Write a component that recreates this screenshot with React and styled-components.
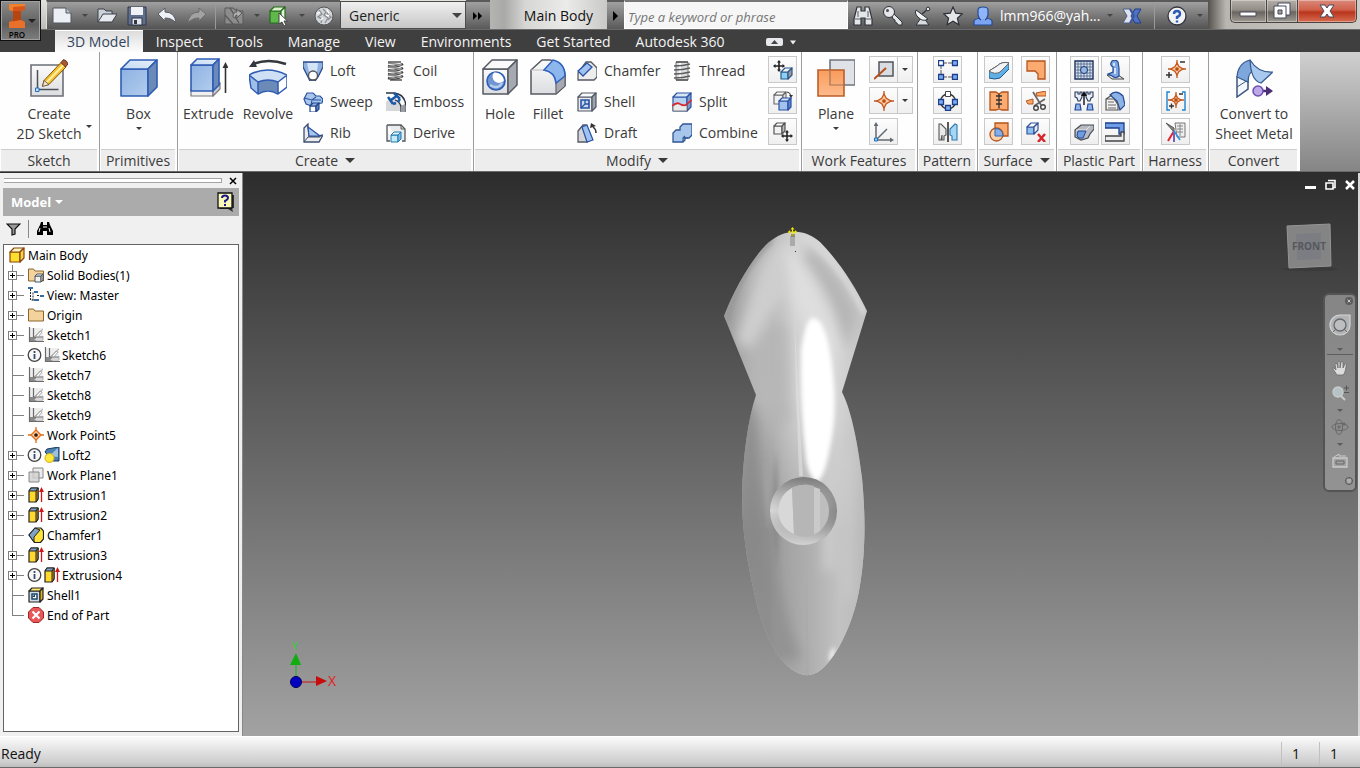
import styled, { createGlobalStyle } from "styled-components";

const GlobalStyle = createGlobalStyle`
  * {
    box-sizing: border-box;
  }
  body {
    margin: 0;
    font-family: "Open Sans", "Noto Sans", sans-serif;
    font-size: 14px;
    color: #3a3a3a;
    overflow: hidden;
  }
  button {
    background: none;
    border: none;
    padding: 0;
    margin: 0;
    font: inherit;
    color: inherit;
    cursor: pointer;
  }
  svg {
    display: block;
    flex: none;
  }
`;

/* ---------- drawing helpers ---------- */

const Glyph = ({ w = 20, h = 20, children }) => (
  <svg width={w} height={h} viewBox={`0 0 ${w} ${h}`} fill="none" aria-hidden="true">
    {children}
  </svg>
);

const Cube = ({ x, y, w, h, d, front = "#a9c6ea", top = "#d8e7f8", side = "#6684b4", stroke = "#24488c", sw = 1.2 }) => (
  <g stroke={stroke} strokeWidth={sw} strokeLinejoin="round">
    <path fill={front} d={`M${x} ${y + d}h${w}v${h}h${-w}z`} />
    <path fill={top} d={`M${x} ${y + d}l${d} ${-d}h${w}l${-d} ${d}z`} />
    <path fill={side} d={`M${x + w} ${y + d}l${d} ${-d}v${h}l${-d} ${d}z`} />
  </g>
);

const WorkPoint = ({ cx = 10, cy = 10, r = 6 }) => (
  <g stroke="#c2561c" strokeWidth="1.300">
    <path d={`M${cx} ${cy - r - 3}v${2 * r + 6}M${cx - r - 3} ${cy}h${2 * r + 6}`} />
    <path
      fill="#fcc79b"
      d={`M${cx} ${cy - r}l${r / 3} ${r * 0.6}l${r * 0.66} ${r * 0.4}l${-r * 0.66} ${r * 0.4}l${-r / 3} ${r * 0.6}l${-r / 3} ${-r * 0.6}l${-r * 0.66} ${-r * 0.4}l${r * 0.66} ${-r * 0.4}z`}
    />
    <circle cx={cx} cy={cy} r="1.200" fill="#7a2c08" />
  </g>
);

const MoveCross = ({ x, y }) => (
  <path
    transform={`translate(${x} ${y})`}
    d="M0-6l2 2.500h-1.200v2.700h2.700v-1.200l2.500 2l-2.500 2v-1.200h-2.700v2.700h1.200l-2 2.500l-2-2.500h1.200v-2.700h-2.700v1.200l-2.500-2l2.500-2v1.200h2.700v-2.700h-1.200z"
    fill="#222"
  />
);

const Caret = ({ w = 8, color = "#3a3a3a" }) => (
  <svg width={w} height={w / 2} viewBox="0 0 8 4" aria-hidden="true">
    <path d="M0 0h8l-4 4z" fill={color} />
  </svg>
);

/* gradients shared by the icons */
const IconDefs = () => (
  <svg width="0" height="0" style={{ position: "absolute" }} aria-hidden="true">
    <defs>
      <linearGradient id="blueFace" x1="0" y1="0" x2="1" y2="1">
        <stop offset="0" stopColor="#8db2e2" />
        <stop offset="1" stopColor="#b3cdee" />
      </linearGradient>
      <linearGradient id="blueTop" x1="0" y1="1" x2="1" y2="0">
        <stop offset="0" stopColor="#c3d9f2" />
        <stop offset="1" stopColor="#e6f0fb" />
      </linearGradient>
      <linearGradient id="grayFace" x1="0" y1="0" x2="0" y2="1">
        <stop offset="0" stopColor="#fbfbfc" />
        <stop offset="1" stopColor="#dcdde0" />
      </linearGradient>
      <linearGradient id="orangeFace" x1="0" y1="0" x2="0" y2="1">
        <stop offset="0" stopColor="#fb9550" />
        <stop offset="1" stopColor="#fdb582" />
      </linearGradient>
    </defs>
  </svg>
);

/* ---------- large ribbon icons ---------- */

const big = {
  sketch: (
    <Glyph w={38} h={40}>
      <path d="M1 7h32v31h-32z" fill="url(#grayFace)" stroke="#6b6f76" strokeWidth="1.600" />
      <path d="M7.500 12v19.500h21" stroke="#4b4f57" strokeWidth="1.500" />
      <path d="M5.500 30h3.500v3.500h-3.500z" fill="#bfe0fa" stroke="#1e6fc0" />
      <path d="M14 22.500l17-18l5 4.500l-17 17.500l-6.500 1.500z" fill="#f8bf2c" stroke="#7c5510" />
      <path d="M16.500 24.500l17-17.500" stroke="#fff0a8" strokeWidth="1.800" />
      <path d="M14 22.500l5 4l-6.500 2z" fill="#f7e4c8" stroke="#5d4a33" strokeWidth=".8" />
      <path d="M31 4.500l2.500-3q3.500 1 4.500 4.500l-2.500 3z" fill="#a85a36" stroke="#6f3317" />
    </Glyph>
  ),
  box: (
    <Glyph w={38} h={40}>
      <Cube x={1} y={2} w={27} h={27} d={9} front="url(#blueFace)" top="url(#blueTop)" side="#6c8ab8" stroke="#2f5cb4" sw={1.6} />
    </Glyph>
  ),
  extrude: (
    <Glyph w={38} h={40}>
      <Cube x={1} y={25} w={22} h={6} d={7} front="#f0f0f0" top="#eee" side="#ccc" stroke="#77797c" />
      <Cube x={1} y={1} w={22} h={26} d={6} front="url(#blueFace)" top="url(#blueTop)" side="#6c8ab8" stroke="#2f5cb4" sw={1.6} />
      <path d="M35.500 35v-26" stroke="#333" strokeWidth="1.600" />
      <path d="M35.500 4l3 6h-6z" fill="#333" />
    </Glyph>
  ),
  revolve: (
    <Glyph w={38} h={40}>
      <path d="M4 6q15-6 33 0" stroke="#33383f" strokeWidth="2.500" />
      <path d="M0 9l5-7l3 7z" fill="#33383f" />
      <path d="M0 17q18-10 38 0l-9 7q-10-4-20 0z" fill="#cfe0f4" />
      <path d="M0 17l9 7v11l-7-6z" fill="#9fbfe6" />
      <path d="M9 24q10-4 20 0v11q-10-5-20 0z" fill="#6c8ab8" />
      <path d="M29 24l9-7v12l-9 7z" fill="#fff" />
      <path d="M0 17q18-10 38 0v12l-9 7q-10-6-20 0l-7-6zM0 17l9 7v12M9 24q10-4 20 0v12M29 24l9-7" stroke="#2f5cb4" strokeWidth="1.500" strokeLinejoin="round" />
    </Glyph>
  ),
  hole: (
    <Glyph w={38} h={40}>
      <Cube x={2} y={2} w={25} h={25} d={9} front="url(#grayFace)" top="#fafafa" side="#a6a9af" stroke="#565a62" sw={1.5} />
      <circle cx="15" cy="23" r="9" fill="#6f95d2" stroke="#2f5cb4" strokeWidth="1.600" />
      <path d="M13 14.500a6 6 0 0 0 10 8a9 9 0 0 0-10-8z" fill="#fff" />
      <path d="M9 27q8 5 12-2" stroke="#b7cdec" strokeWidth="2.500" />
    </Glyph>
  ),
  fillet: (
    <Glyph w={38} h={40}>
      <path d="M2 12l11-10h8q15 3 15 16v10l-9 8h-25z" fill="url(#grayFace)" stroke="#565a62" strokeWidth="1.500" />
      <path d="M2 12h12q12 2 13 14v10" stroke="#bbb" />
      <path d="M27 25l9-8v11l-9 8z" fill="#a6a9af" stroke="#565a62" />
      <path d="M15 12l9-10q12 3 12 16l-9 7q-1-11-12-13z" fill="#8db6ec" stroke="#2f62c0" strokeWidth="1.500" />
    </Glyph>
  ),
  plane: (
    <Glyph w={38} h={40}>
      <path d="M13 2h25v25h-25z" fill="#dfe2e6" stroke="#70757e" strokeWidth="1.600" />
      <path d="M1 12h26v26h-26z" fill="url(#orangeFace)" fillOpacity=".92" stroke="#bb5f28" strokeWidth="1.600" />
      <path d="M13 12v15h14" stroke="#a97a5c" strokeWidth="1.200" />
    </Glyph>
  ),
  convert: (
    <Glyph w={38} h={40}>
      <path d="M2 19l11-6v18l-11 8z" fill="#f4f7fb" stroke="#3c5680" strokeWidth="1.500" />
      <path d="M2 29l11-7" stroke="#3c5680" />
      <path d="M2 19q1-14 13-17q3 7 6 10q-8 1-8 12z" fill="#7fa7db" stroke="#34598f" strokeWidth="1.200" />
      <path d="M15 2q8 13 23 12l-12 11q-10-2-11-23z" fill="#a9c9ee" stroke="#34598f" strokeWidth="1.200" />
      <path d="M24 33h9" stroke="#4b2f74" strokeWidth="2.500" />
      <path d="M31 28l7 5l-7 5z" fill="#4b2f74" />
      <circle cx="23" cy="33" r="5" fill="#bda9ea" stroke="#6d4fae" strokeWidth="1.500" />
    </Glyph>
  ),
};

/* ---------- 20px ribbon icons ---------- */

const small = {
  loft: (
    <Glyph>
      <path d="M0 1h20v5l-5 10l-3 4h-5l-2-4l-5-10z" fill="#8fb2e0" stroke="#2c4c8c" strokeWidth="1.300" />
      <path d="M4 2h11l-1 9h-8z" fill="#d3e4f7" />
      <circle cx="10" cy="14.500" r="4.500" fill="#fff" stroke="#555" strokeWidth="1.300" />
    </Glyph>
  ),
  sweep: (
    <Glyph>
      <path d="M4 1h6l3 3h4l3 3-1 4-7 1-3 2-6-2-2-5z" fill="#a9c6ea" stroke="#2a52a4" strokeWidth="1.200" />
      <path d="M1 6l8 2l4-3M9 8l-1 5M18 8h-8" stroke="#2a52a4" strokeWidth="1.100" />
      <Cube x={7} y={11} w={6} h={6} d={3} front="#fff" top="#8fb2e0" side="#5b7fc0" />
    </Glyph>
  ),
  rib: (
    <Glyph>
      <path d="M1 5l4-4v3l1 9h10l4-1l-4 7h-15z" fill="#ececee" stroke="#3b4d70" strokeWidth="1.300" />
      <path d="M5 4l12 9h-11z" fill="#a9c6ea" stroke="#2a52a4" strokeWidth="1.200" />
      <path d="M1 19l4-5h12" stroke="#3b4d70" />
    </Glyph>
  ),
  coil: (
    <Glyph>
      {[2, 6, 10, 14].map((y) => (
        <g key={y}>
          <path d={`M2 ${y + 3}q8 2 15-2`} stroke="#3a3a3a" strokeWidth="2.500" />
          <path d={`M2 ${y}l14 2`} stroke="#8a8a8a" strokeWidth="1.500" />
          <path d={`M3 ${y + 3}q7 1 12-1`} stroke="#bbb" strokeWidth=".8" />
        </g>
      ))}
      <path d="M2 1h13M4 19h12" stroke="#555" strokeWidth="1.500" />
    </Glyph>
  ),
  emboss: (
    <Glyph>
      <path d="M0 10l4-4q8-2 12 7v6h-16z" fill="#d5d7da" />
      <path d="M0 1h8q11 1 12 13v6M15 20v-5q-1-5-6-7" stroke="#2d3640" strokeWidth="1.300" />
      <path d="M15 20v-6l4-2v8z" fill="#9a9da3" />
      <path d="M2 5l5 7M8 1l6 6M5 8l7-5M7 12l3-1M14 7l-2 3" stroke="#1a57a8" strokeWidth="2.500" />
    </Glyph>
  ),
  derive: (
    <Glyph>
      <path d="M1 2h14l4 4v12h-3M1 2v16h3" fill="#eaebec" stroke="#54585e" strokeWidth="1.300" />
      <path d="M15 2v4h4" stroke="#54585e" />
      <Cube x={5} y={9} w={7} h={7} d={3} front="#c8e9fb" top="#e4f5fd" side="#7ac0ea" stroke="#1f78ac" sw={1} />
    </Glyph>
  ),
  chamfer: (
    <Glyph>
      <path d="M1 12v7h16l3-3v-9l-6-6h-5z" fill="#ededee" stroke="#565a62" strokeWidth="1.300" />
      <path d="M1 10l9-8l5 4l-9 9z" fill="#9fc2ee" stroke="#2a52a4" strokeWidth="1.300" />
    </Glyph>
  ),
  shell: (
    <Glyph>
      <Cube x={1} y={1} w={14} h={14} d={4} front="#ececee" top="#fafafa" side="#9fa3aa" stroke="#4f5664" />
      <path d="M4 8h8v8h-8z" fill="#c6daf2" stroke="#2a52a4" strokeWidth="1.600" />
      <path d="M8 8v4h4M4 16l4-4" stroke="#2a52a4" strokeWidth="1.300" />
    </Glyph>
  ),
  draft: (
    <Glyph>
      <path d="M1 8l5-6h3l5 15l-4 2h-9z" fill="#d3d5d9" stroke="#565a62" strokeWidth="1.300" />
      <path d="M5 4l5-2l6 15l-6 2z" fill="#9fc2ee" stroke="#2a52a4" strokeWidth="1.200" />
      <path d="M19 10q0-4-3-6" stroke="#333" strokeWidth="1.500" />
      <path d="M13 5l1-5l5 3z" fill="#333" />
    </Glyph>
  ),
  thread: (
    <Glyph>
      <path d="M4 1h12v18h-12z" fill="#dcdddf" stroke="#777" />
      <path d="M8 2v16" stroke="#fff" strokeWidth="2" />
      {[4, 8, 12, 16].map((y) => (
        <path key={y} d={`M2 ${y + 1}q9 0 16-2`} stroke="#5c5c5c" strokeWidth="1.400" />
      ))}
      <path d="M4 1h12M4 19h12" stroke="#555" strokeWidth="1.500" />
    </Glyph>
  ),
  split: (
    <Glyph>
      <Cube x={1} y={1} w={14} h={14} d={4} front="#b7d1f0" top="#d8e7f8" side="#7f9cc8" stroke="#2a52a4" />
      <path d="M1 14q5-4 8-1q4 1 6 0v6h-14z" fill="#eaeaea" stroke="#666" strokeWidth=".8" />
      <path d="M0 14q5-5 9-1.500q4 2 6-.5l4.500-4" stroke="#e0242c" strokeWidth="1.600" />
    </Glyph>
  ),
  combine: (
    <Glyph>
      <path d="M8 4l3-3h9v11l-3 3h-4v2l-2 2h-10v-9l3-3h4z" fill="#a7c6ec" stroke="#2f5592" strokeWidth="1.300" />
      <path d="M11 19v-4h5M11 15l2-2" stroke="#2f5592" strokeWidth="1.100" />
    </Glyph>
  ),
  moveFace: (
    <Glyph>
      <Cube x={8} y={8} w={7} h={7} d={4} front="#8cd0f6" top="#f4f4f4" side="#999" stroke="#2f5a8c" />
      <MoveCross x={6} y={6} />
    </Glyph>
  ),
  copyObject: (
    <Glyph>
      <Cube x={1} y={1} w={9} h={9} d={3} front="#f2f2f2" top="#fff" side="#ddd" stroke="#666" sw={1.1} />
      <Cube x={6} y={7} w={9} h={9} d={3} front="#a3c2ee" top="#d5e4f8" side="#5d83ca" stroke="#2a52a4" />
      <path d="M14 1q3 0 4 4" stroke="#333" />
      <path d="M16 4h4l-2 3z" fill="#333" />
    </Glyph>
  ),
  moveBodies: (
    <Glyph>
      <Cube x={1} y={1} w={8} h={8} d={3} front="#f2f2f2" top="#fff" side="#bbb" stroke="#555" sw={1.2} />
      <MoveCross x={14} y={14} />
    </Glyph>
  ),
  axis: (
    <Glyph>
      <path d="M5 2h14v14h-14z" fill="#d9dce0" stroke="#50555d" strokeWidth="1.500" />
      <path d="M0 19l12-11" stroke="#b4501c" strokeWidth="2" />
    </Glyph>
  ),
  point: (
    <Glyph>
      <WorkPoint r={7} />
    </Glyph>
  ),
  ucs: (
    <Glyph>
      <path d="M2 3v15h16M3 17l10-10" stroke="#666b72" strokeWidth="1.500" />
      <path d="M2 0l2.500 4h-5zM20 18l-4-2.500v5z" fill="#666b72" />
      <path d="M.5 16h3v3h-3z" fill="#8ccaf8" stroke="#1f70c0" />
    </Glyph>
  ),
  patternRect: (
    <Glyph>
      <path d="M3 3h14M3 3v14h14" stroke="#555" strokeDasharray="6 1" />
      <path d="M.5.500h5v5h-5z" fill="#fff" stroke="#1d3f8a" strokeWidth="1.300" />
      <path d="M14.500.500h5v5h-5zM.5 14.500h5v5h-5zM14.500 14.500h5v5h-5z" fill="#7bacf0" stroke="#1d3f8a" strokeWidth="1.300" />
    </Glyph>
  ),
  patternCirc: (
    <Glyph>
      <circle cx="10" cy="10.500" r="7.500" stroke="#333" strokeWidth="1.400" />
      <path d="M7.500.500h5v5h-5z" fill="#fff" stroke="#444" />
      <path d="M.5 8.500h5v5h-5zM14.500 8.500h5v5h-5zM7.500 14.500h5v5h-5z" fill="#7bacf0" stroke="#1d3f8a" strokeWidth="1.300" />
    </Glyph>
  ),
  mirror: (
    <Glyph>
      <path d="M10 0v20" stroke="#222" strokeWidth="1.500" />
      <path d="M1 2h2l5 5v6l-2 1v4h-2v-5l-1 5h-2z" fill="#e9e9e9" stroke="#555" strokeWidth="1.100" />
      <path d="M19 3l-2-1l-5 5v6l2 1v4h5z" fill="#a6d6f4" stroke="#2a7ab4" strokeWidth="1.100" />
    </Glyph>
  ),
  thicken: (
    <Glyph>
      <path d="M0 11l8-5q5-5 12-3v6l-9 9q-5 2-11 0z" fill="#5fb0e6" stroke="#20568c" />
      <path d="M0 11l8-5q5-5 12-3l-9 9q-5 3-11-1z" fill="#f4f4f4" stroke="#666" />
    </Glyph>
  ),
  patch: (
    <Glyph>
      <path d="M1 1h18v18h-7v-5l-3-3h-8z" fill="#fbab6f" stroke="#b4541c" strokeWidth="1.300" />
    </Glyph>
  ),
  stitch: (
    <Glyph>
      <path d="M1 1h6l3 2l3-2h6v18h-6l-3-1-3 1h-6z" fill="#fbab6f" stroke="#b4541c" strokeWidth="1.300" />
      <path d="M10 3v14M7 5h6M7 9h6M7 13h6" stroke="#333" strokeWidth="1.300" />
    </Glyph>
  ),
  trim: (
    <Glyph>
      <path d="M10 2l10-2v5h-9zM0 10l7-2v5h-5z" fill="#fba767" stroke="#b4541c" />
      <path d="M7 1l8 13M19 8l-11 7" stroke="#666" strokeWidth="1.700" />
      <circle cx="10" cy="17" r="2.300" stroke="#444" strokeWidth="1.400" />
      <circle cx="17" cy="16" r="2.300" stroke="#444" strokeWidth="1.400" />
    </Glyph>
  ),
  sculpt: (
    <Glyph>
      <path d="M6 1h13v13h-13z" fill="#fbab6f" stroke="#b4541c" strokeWidth="1.300" />
      <circle cx="7.500" cy="12.500" r="6.500" fill="#fcd2ad" stroke="#b4541c" strokeWidth="1.300" />
      <path d="M6 6.500q8 0 8 7.500h-8z" fill="#86aee8" stroke="#3a64a8" />
    </Glyph>
  ),
  deleteFace: (
    <Glyph>
      <Cube x={1} y={1} w={7} h={7} d={4} front="#8fc0ef" top="#fff" side="#eee" stroke="#33549a" />
      <path d="M12 12l7 8M19 12l-7 8" stroke="#d8262c" strokeWidth="2.500" />
    </Glyph>
  ),
  grill: (
    <Glyph>
      <path d="M1 1h18v18h-18z" fill="#dbe4f1" stroke="#1c2f58" strokeWidth="1.400" />
      <path d="M4 1v18M7 1v18M10 1v18M13 1v18M16 1v18M1 4h18M1 7h18M1 10h18M1 13h18M1 16h18" stroke="#4a6088" strokeWidth=".8" />
      <circle cx="10" cy="10" r="3.500" fill="#9bb8e0" stroke="#1c3a78" />
    </Glyph>
  ),
  boss: (
    <Glyph>
      <path d="M2 15h11l6 4h-12z" fill="#e8e8e8" stroke="#444" />
      <path d="M7 1q4-2 6 1l1 6v8q-3 3-7 0l-4-2 5-2v-5q-4-2-1-6z" fill="#7fa8e4" stroke="#234a94" strokeWidth="1.200" />
      <path d="M9 3v3M10 8v6" stroke="#d4e4fa" strokeWidth="2" />
    </Glyph>
  ),
  snap: (
    <Glyph>
      <path d="M1 1h3v2h2v-2h2v5l-2 4h-2l-1-3-2-1zM19 1h-3v2h-2v-2h-2v5l2 4h2l1-3 2-1z" fill="#e8edf4" stroke="#26395e" strokeWidth="1.100" />
      <path d="M2 13h4l1 6h-6zM14 13h4l1 6h-6z" fill="#8db4ee" stroke="#234a94" strokeWidth="1.200" />
      <path d="M10 14v-10" stroke="#111" strokeWidth="1.400" />
      <path d="M10 0l3 5h-6z" fill="#111" />
    </Glyph>
  ),
  rest: (
    <Glyph>
      <path d="M5 4q6-6 13 1l2 9-5 5-3-9z" fill="#8db2e8" stroke="#234a94" strokeWidth="1.200" />
      <path d="M1 8l6-4M1 8h8q3 3 4 6v5h-12z" fill="#f2f2f2" stroke="#555" strokeWidth="1.200" />
      <path d="M3 11h6M3 14h8M3 17h8" stroke="#666" />
    </Glyph>
  ),
  ruleFillet: (
    <Glyph>
      <path d="M1 8l6-5h13v4l-4 5-2 4-7 2-6-3z" fill="#b7bac0" stroke="#454a52" strokeWidth="1.200" />
      <path d="M2 8h10l4-4" stroke="#e8e8e8" />
      <path d="M4 9h8l-3 7q-5 1-6-2z" fill="#6f9be0" stroke="#234a94" />
    </Glyph>
  ),
  lip: (
    <Glyph>
      <path d="M0 1h19v11h-5v-6h-14z" fill="#6f9ce6" stroke="#1d3f8a" strokeWidth="1.300" />
      <path d="M0 19h19v-9h-3v4h-16z" fill="#ececee" stroke="#444" strokeWidth="1.300" />
    </Glyph>
  ),
  pin: (
    <Glyph>
      <WorkPoint cx={11} cy={9} r={6} />
      <path d="M0 15h6M3 12v6M14 2h5" stroke="#333" strokeWidth="1.500" />
    </Glyph>
  ),
  pinGroup: (
    <Glyph>
      <WorkPoint cx={10} cy={9} r={5} />
      <path d="M4 1h-3v18h3M16 1h3v18h-3" stroke="#1c84d0" strokeWidth="1.400" />
      <path d="M3 15h5M5.500 12.500v5M13 3h4" stroke="#333" strokeWidth="1.300" />
    </Glyph>
  ),
  harnessProps: (
    <Glyph>
      <path d="M9 1h10v14h-8z" fill="#eee" stroke="#777" />
      <path d="M11 4h6M11 7h6M11 10h6M14 2v12" stroke="#888" />
      <path d="M0 1l8 9v-4z" fill="#888" stroke="#555" />
      <path d="M8 9l-6 10" stroke="#e02430" strokeWidth="2" />
      <path d="M8 9v11" stroke="#7c5cc0" strokeWidth="2" />
      <path d="M8 9l6 9" stroke="#2c94d8" strokeWidth="1.500" />
    </Glyph>
  ),
};

/* ---------- title bar icons ---------- */

const bar = {
  newFile: (
    <Glyph>
      <path d="M1 2h13l5 5v10h-18z" fill="#eceff3" stroke="#50565f" />
      <path d="M14 2v5h5" fill="#bfc5cf" stroke="#50565f" />
    </Glyph>
  ),
  open: (
    <Glyph>
      <path d="M1 16v-13h6l2 2h6v3" fill="#cdd2d9" stroke="#3b4048" />
      <path d="M1 16l5-8h14l-5 8z" fill="#e7eaee" stroke="#3b4048" />
    </Glyph>
  ),
  save: (
    <Glyph>
      <path d="M1 1h18v18h-18z" fill="#5f6f8c" stroke="#2f3849" />
      <path d="M4 1h12v8h-12z" fill="#f0f2f5" />
      <path d="M5 12h10v7h-10z" fill="#e2e5ea" stroke="#2f3849" />
      <path d="M7 14h3v4h-3z" fill="#2f3849" />
    </Glyph>
  ),
  undo: (
    <Glyph>
      <path d="M1 8l7-6v4q10 0 11 11q-4-5-11-5v3z" fill="#eef1f5" stroke="#545b66" />
    </Glyph>
  ),
  redo: (
    <Glyph>
      <path d="M19 8l-7-6v4q-10 0-11 11q4-5 11-5v3z" fill="#a2a2a2" stroke="#6c6c6c" />
    </Glyph>
  ),
  update: (
    <Glyph>
      <path d="M1 2h8l4 3h6v13h-18z" fill="#8c8c8c" stroke="#585858" />
      <path d="M6 2l9 15M1 9l8 9" stroke="#585858" strokeWidth="1.300" />
      <path d="M9 11q0-5 4-5l-1-3l6 4-5 5v-3q-2 0-2 3z" fill="#b0b0b0" stroke="#5a5a5a" />
    </Glyph>
  ),
  select: (
    <Glyph>
      <Cube x={1} y={1} w={11} h={12} d={4} front="#5eb84a" top="#d9f2cd" side="#e8f4e2" stroke="#276a1c" />
      <path d="M10 7v11l3-2l2 4l2-1l-2-4h3.500z" fill="#fff" stroke="#444" />
    </Glyph>
  ),
  sphere: (
    <Glyph>
      <circle cx="10" cy="10" r="9" fill="#d2d5d8" stroke="#555" />
      <path d="M5 4l3 4-4 3 4 2-1 4M9 3l3 3-2 3 4 3-3 5M15 5l-2 3 4 3-3 3" stroke="#8d9196" strokeWidth="1.400" />
      <path d="M3 8l3-2M9 12l-2 2M13 4l2 3M12 9l3 1" stroke="#fff" strokeWidth="1.500" />
    </Glyph>
  ),
  binoculars: (
    <Glyph>
      <path d="M3 5l1-4h4v4h4v-4h4l1 4 2 8v6h-7v-7h-4v7h-7v-6z" fill="#e4e6ea" stroke="#30343a" strokeWidth="1.200" />
      <path d="M2 13h6M12 13h6M5 5v6M15 5v6" stroke="#565b63" />
    </Glyph>
  ),
  key: (
    <Glyph>
      <path d="M9 10l2-2l8 8v3h-4l-1-2-2-1v-2l-2-1z" fill="#e4e6ea" stroke="#30343a" />
      <circle cx="6" cy="6" r="5.500" fill="#e4e6ea" stroke="#30343a" />
      <circle cx="4.500" cy="4.500" r="1.500" fill="#4a4f57" />
    </Glyph>
  ),
  dish: (
    <Glyph>
      <path d="M8 12l-5 7h13l-5-7z" fill="#d8dbe0" stroke="#30343a" />
      <path d="M3 4l12 9q-5 3-9-1q-5-4-3-8z" fill="#f0f2f4" stroke="#30343a" />
      <path d="M9 8l6-5" stroke="#30343a" strokeWidth="1.300" />
      <circle cx="15" cy="3" r="1.800" fill="#e4e6ea" stroke="#30343a" />
    </Glyph>
  ),
  star: (
    <Glyph>
      <path d="M10 1l2.700 6.200l6.700.6l-5 4.400l1.500 6.600l-5.900-3.500l-5.900 3.500l1.500-6.600l-5-4.400l6.700-.6z" fill="#e4e6ea" stroke="#2c3036" strokeWidth="1.200" />
    </Glyph>
  ),
  user: (
    <Glyph>
      <path d="M1 19v-4q0-2 7-3h4q7 1 7 3v4z" fill="#7ba4f2" stroke="#254a94" strokeWidth="1.200" />
      <path d="M5 4q0-3 5-3t5 3v5q-1 4-3 5h-4q-2-1-3-5z" fill="#8fb4f8" stroke="#254a94" strokeWidth="1.200" />
      <path d="M8 13h4v2h-4z" fill="#7ba4f2" />
    </Glyph>
  ),
  exchange: (
    <Glyph>
      <path d="M1 3h7l4 7-4 7h-7l4-7z" fill="#dde2ee" stroke="#4f5f85" />
      <path d="M19 3h-6l-4 7 4 7h6l-4-7z" fill="#4d72c6" stroke="#233f80" />
      <path d="M8 3l4 7l-4 7" stroke="#3a56a0" strokeWidth="2" />
    </Glyph>
  ),
  help: (
    <Glyph>
      <circle cx="10" cy="10" r="9" fill="#f0f2f6" stroke="#32363e" strokeWidth="1.300" />
      <path d="M7 8q0-3 3-3t3 3q0 2-3 3v2M10 14.500v2" stroke="#2b59b4" strokeWidth="2.400" />
    </Glyph>
  ),
};

/* ---------- browser tree icons ---------- */

const node = {
  part: (
    <Glyph w={16} h={16}>
      <Cube x={1} y={1} w={10} h={10} d={4} front="#ffdf2e" top="#fff6c0" side="#f9d24e" stroke="#8a440c" />
    </Glyph>
  ),
  bodies: (
    <Glyph w={16} h={16}>
      <path d="M.5 14v-12h5l1.500 2h8.500v10z" fill="#f3d29c" stroke="#8c6530" />
      <Cube x={7} y={7} w={6} h={6} d={2} front="#f0f0f0" top="#fff" side="#ccc" stroke="#4b5663" sw={1} />
    </Glyph>
  ),
  view: (
    <Glyph w={16} h={16}>
      <path d="M2.500 2v11h4M8 5.500h-3v9M9 8.500h4" stroke="#222" strokeDasharray="2 1" />
      <path d="M0 0h5v2h-5zM6 4h4v2h-4zM12 8h4v2h-4zM6 12h5v2h-5z" fill="#3b6a9c" />
    </Glyph>
  ),
  folder: (
    <Glyph w={16} h={16}>
      <path d="M.5 14v-12h5l1.500 2h8.500v10z" fill="#f3d29c" stroke="#8c6530" />
    </Glyph>
  ),
  sketch: (
    <Glyph w={16} h={16}>
      <path d="M1 1h14v14h-14z" fill="#eee" />
      <path d="M1 10h7v5h-7z" fill="#8a8a8a" />
      <path d="M1.500 0v15M5.500 1v9h10M1 14.500h15" stroke="#6a6a6a" strokeWidth="1.200" />
      <path d="M6 10l9-8M8 9l4-5l2 1l-4 5z" stroke="#999" fill="#fff" strokeWidth=".8" />
      <path d="M8 11h7v2h-9z" fill="#fff" stroke="#999" strokeWidth=".8" />
    </Glyph>
  ),
  point: (
    <Glyph w={16} h={16}>
      <g stroke="#e0701c" strokeWidth="1.300">
        <path d="M8 0v16M0 8h16" />
        <path fill="#fcd0a4" d="M8 3l5 5l-5 5l-5-5z" />
        <circle cx="8" cy="8" r="1.200" fill="#3b1c08" stroke="#3b1c08" />
      </g>
    </Glyph>
  ),
  loft: (
    <Glyph w={16} h={16}>
      <path d="M1 5l2-3l12-2v14h-6z" fill="#4c81b2" stroke="#173a5c" />
      <path d="M5 9l9-8v9z" fill="#9cc0de" />
      <circle cx="5.500" cy="11" r="4.500" fill="#ffe93a" stroke="#d8aa18" />
    </Glyph>
  ),
  plane: (
    <Glyph w={16} h={16}>
      <path d="M5 1h10v10h-10z" fill="#ececec" stroke="#888" />
      <path d="M1 5h10v10h-10z" fill="#cfcfcf" fillOpacity=".8" stroke="#888" />
    </Glyph>
  ),
  extrusion: (
    <Glyph w={16} h={16}>
      <path d="M1 4l2-3h7v11l-2 3h-7z" fill="#ffd92b" stroke="#222" strokeWidth="1.200" />
      <path d="M1 4l2-3h7l-2 3z" fill="#7fa3c4" stroke="#222" />
      <path d="M8 4v11l2-3v-11z" fill="#c4961a" stroke="#222" />
      <path d="M13.500 15v-11" stroke="#d01818" strokeWidth="1.300" />
      <path d="M13.500 0l2.500 5h-5z" fill="#d01818" />
    </Glyph>
  ),
  chamfer: (
    <Glyph w={16} h={16}>
      <path d="M1 8l6-7h6l2.500 3v8l-3 3.500h-6z" fill="#ffe23a" stroke="#222" strokeWidth="1.200" />
      <path d="M1 8l6-7l5 2l-6 7v5z" fill="#7fa3c4" stroke="#222" />
    </Glyph>
  ),
  shell: (
    <Glyph w={16} h={16}>
      <Cube x={1} y={1} w={11} h={11} d={3} front="#cfdde9" top="#ffe86a" side="#e2b11c" stroke="#222" />
      <path d="M4 7h5v5h-5z" fill="#fff" stroke="#1d4468" strokeWidth="1.500" />
      <path d="M7 7v3h-3z" fill="#1d4468" />
    </Glyph>
  ),
  end: (
    <Glyph w={16} h={16}>
      <path d="M5 .5h6l4.500 4.500v6l-4.500 4.500h-6l-4.500-4.500v-6z" fill="#ea5658" stroke="#96282a" />
      <path d="M4.500 4.500l7 7M11.500 4.500l-7 7" stroke="#fff" strokeWidth="2.200" />
    </Glyph>
  ),
};

/* ---------- data ---------- */

const TABS = ["3D Model", "Inspect", "Tools", "Manage", "View", "Environments", "Get Started", "Autodesk 360"];

const TREE = [
  { label: "Solid Bodies(1)", icon: "bodies", open: true },
  { label: "View: Master", icon: "view", open: true },
  { label: "Origin", icon: "folder", open: true },
  { label: "Sketch1", icon: "sketch", open: true },
  { label: "Sketch6", icon: "sketch", info: true },
  { label: "Sketch7", icon: "sketch" },
  { label: "Sketch8", icon: "sketch" },
  { label: "Sketch9", icon: "sketch" },
  { label: "Work Point5", icon: "point" },
  { label: "Loft2", icon: "loft", open: true, info: true },
  { label: "Work Plane1", icon: "plane", open: true },
  { label: "Extrusion1", icon: "extrusion", open: true },
  { label: "Extrusion2", icon: "extrusion", open: true },
  { label: "Chamfer1", icon: "chamfer" },
  { label: "Extrusion3", icon: "extrusion", open: true },
  { label: "Extrusion4", icon: "extrusion", open: true, info: true },
  { label: "Shell1", icon: "shell" },
  { label: "End of Part", icon: "end", last: true },
];

/* ---------- shell ---------- */

const Window = styled.div`
  display: flex;
  flex-direction: column;
  height: 100vh;
  background: #f0f0f0;
`;

const Header = styled.header`
  display: flex;
  background: #3f3f3f;
`;

const AppButton = styled.button`
  width: 41px;
  height: 41px;
  padding-left: 3px;
  border: 1px solid #111;
  outline: 1px solid #a0a0a0;
  outline-offset: -2px;
  background: linear-gradient(#8c8c8c, #5f5f5f 60%, #7e7e7e);
  display: flex;
  align-items: center;
  justify-content: center;
  gap: 2px;
  color: #000;
`;

const AppMark = styled.span`
  display: flex;
  flex-direction: column;
  align-items: center;
  font-size: 8px;
  line-height: 9px;
  font-weight: 600;
`;

const HeaderRows = styled.div`
  flex: 1;
  min-width: 0;
`;

const TitleBar = styled.div`
  display: flex;
  height: 30px;
  padding-left: 5px;
  background: linear-gradient(#e4e2dd, #bdbbb7);
  border-bottom: 1px solid #6a6a6a;
`;

const Strip = styled.div`
  display: flex;
  align-items: center;
  background: linear-gradient(#a0a0a0, #787878 50%, #545454);
  border-top: 2px solid #5a5a5a;
  border-left: ${(p) => (p.$edge ? "1px solid #ddd" : "none")};
  padding-right: 1px;
`;

const BarButton = styled.button`
  width: ${(p) => (p.$narrow ? "15px" : "30px")};
  height: 26px;
  display: flex;
  align-items: center;
  justify-content: center;
`;

const Divider = styled.span`
  width: 1px;
  height: 26px;
  margin: 0 ${(p) => (p.$wide ? "7px" : "3px")};
  background: #9a9a9a;
`;

const StyleSelect = styled.select`
  width: 126px;
  height: 28px;
  margin-top: 1px;
  border: 1px solid #4c4c4c;
  border-radius: 0;
  background: linear-gradient(#f0f0f0, #c6c6c6);
  appearance: none;
  font: inherit;
  color: #222;
  padding: 0 8px;
`;

const SelectWrap = styled.label`
  display: flex;
  position: relative;

  svg {
    position: absolute;
    right: 4px;
    top: 13px;
    pointer-events: none;
  }
`;

const ArrowButton = styled.button`
  width: ${(p) => p.$w}px;
  display: flex;
  align-items: center;
  justify-content: center;
  background: linear-gradient(#a0a0a0, #5a5a5a);
  border-top: 2px solid #5a5a5a;
`;

const DocTitle = styled.div`
  width: 117px;
  padding-right: 14px;
  text-align: right;
  line-height: 31px;
  color: #111;
  background: linear-gradient(90deg, #b4b4b2, #a9a9a7 12%, #d6d6d4 30%, #ebebe9 65%, #c9c9c7);
`;

const Search = styled.input`
  flex: 1;
  min-width: 80px;
  border: 1px solid #fff;
  border-top: 2px solid #777;
  border-radius: 0;
  background: #f6f6f6;
  padding: 4px 3px 0;
  font: italic 13px "Open Sans", "Noto Sans", sans-serif;

  &::placeholder {
    color: #757575;
    opacity: 1;
  }
`;

const Account = styled.button`
  width: 104px;
  padding-left: 2px;
  text-align: left;
  color: #fff;
`;

const WindowControls = styled.div`
  display: flex;
  align-items: flex-start;
  width: 152px;
  padding: 0 3px 0 22px;
  background: linear-gradient(90deg, #55524e, #b9b5b0 18px, #cfccc7);
`;

const ControlButton = styled.button`
  flex: ${(p) => p.$grow || 1};
  height: 23px;
  display: flex;
  justify-content: center;
  align-items: center;
  border: 1px solid #4a4542;
  border-top: none;
  border-right-width: ${(p) => (p.$close ? "1px" : "0")};
  border-radius: ${(p) => (p.$close ? "0 0 5px 0" : p.$first ? "0 0 0 5px" : "0")};
  box-shadow: inset 0 0 0 1px rgba(255, 255, 255, 0.35);
  background: ${(p) =>
    p.$close ? "linear-gradient(#d9897a, #d0604a 45%, #b8351c 55%, #d86c50)" : "linear-gradient(#b4aea8, #938d87 45%, #6b655f 55%, #a09a94)"};
`;

const Tabs = styled.nav`
  display: flex;
  height: 22px;
  padding-left: 14px;
  background: #3f3f3f;
`;

const Tab = styled.button`
  padding: 0 ${(p) => (p.$active ? "13px" : "12px")} 0 12px;
  line-height: 21px;
  height: 22px;
  margin-right: 1px;
  color: ${(p) => (p.$active ? "#33455c" : "#f4f4f4")};
  background: ${(p) => (p.$active ? "linear-gradient(#dcdcdc, #fdfdfd)" : "none")};
  border-top: 1px solid ${(p) => (p.$active ? "#fff" : "transparent")};
`;

const TabSpacer = styled.span`
  width: 15px;
`;

/* ---------- ribbon ---------- */

const Ribbon = styled.div`
  display: flex;
  background: linear-gradient(#d0d0d0, #858585);
  border-bottom: 1px solid #6a6a6a;
`;

const PanelBox = styled.section`
  width: ${(p) => p.$w}px;
  display: flex;
  flex-direction: column;
  background: #fefefe;
  border-right: 1px solid ${(p) => (p.$last ? "#fff" : "#9c9c9c")};
`;

const PanelBody = styled.div`
  height: 97px;
  display: flex;
  justify-content: ${(p) => (p.$center ? "center" : "flex-start")};
  padding-left: ${(p) => p.$pad || 0}px;
`;

const PanelTitle = styled.div`
  height: 22px;
  margin: 0 2px 0 1px;
  display: flex;
  align-items: center;
  justify-content: center;
  gap: 7px;
  white-space: nowrap;
  line-height: 20px;
  background: #ededed;
  border-top: 1px solid #cdcdcd;
`;

const BigButton = styled.button`
  width: ${(p) => p.$w}px;
  padding-top: 6px;
  display: flex;
  flex-direction: column;
  align-items: center;
  line-height: 20px;
  white-space: pre;

  > span {
    margin: 6px -8px 3px;
  }
`;

const SideCaret = styled.button`
  width: 12px;
  padding-bottom: 21px;
  display: flex;
  align-items: flex-end;
  justify-content: center;
`;

const ToolColumn = styled.div`
  width: ${(p) => p.$w}px;
  padding-top: 3px;
  margin-left: ${(p) => p.$gap || 0}px;
`;

const Tool = styled.button`
  display: flex;
  align-items: center;
  gap: 7px;
  height: 31px;
  white-space: nowrap;
`;

const MiniGrid = styled.div`
  display: grid;
  grid-template-columns: repeat(${(p) => p.$cols || 1}, auto);
  grid-auto-rows: 27px;
  gap: 4px ${(p) => p.$gap || 0}px;
  padding-top: 4px;
  justify-content: start;
`;

const Mini = styled.button`
  width: ${(p) => (p.$caret ? "16px" : "29px")};
  display: flex;
  align-items: center;
  justify-content: center;
  background: linear-gradient(#fdfdfd, #efefef);
  border: 1px solid #c9c9c9;
  margin-left: ${(p) => (p.$caret ? "-1px" : "0")};
`;

const Panel = ({ title, menu, w, pad, center, last, children }) => (
  <PanelBox $w={w} $last={last}>
    <PanelBody $pad={pad} $center={center}>
      {children}
    </PanelBody>
    <PanelTitle>
      {title}
      {menu && <Caret w={10} />}
    </PanelTitle>
  </PanelBox>
);

const Big = ({ icon, label, w, menu }) => (
  <BigButton type="button" $w={w}>
    {big[icon]}
    <span>{label}</span>
    {menu && <Caret w={6} />}
  </BigButton>
);

const Tools = ({ w, gap, items }) => (
  <ToolColumn $w={w} $gap={gap}>
    {items.map(([icon, label]) => (
      <Tool type="button" key={icon}>
        {small[icon]}
        {label}
      </Tool>
    ))}
  </ToolColumn>
);

const Minis = ({ items, cols, gap }) => (
  <MiniGrid $cols={cols} $gap={gap}>
    {items.map(([icon, label]) => (
      <Mini type="button" key={icon} aria-label={label}>
        {small[icon]}
      </Mini>
    ))}
  </MiniGrid>
);

/* ---------- model browser ---------- */

const Main = styled.main`
  flex: 1;
  min-height: 0;
  display: flex;
  border-top: 1px solid #2c2c2c;
`;

const Browser = styled.aside`
  width: 243px;
  display: flex;
  flex-direction: column;
  padding: 0 3px 4px;
  background: #f0f0f0;
  border-right: 1px solid #888;
`;

const Grip = styled.div`
  height: 15px;
  display: flex;
  align-items: center;
  gap: 7px;
  padding: 0 2px 0 1px;

  > span {
    flex: 1;
    height: 5px;
    border: 1px solid #a4a4a4;
    border-left: none;
    background: #fff;
  }
`;

const BrowserHead = styled.div`
  height: 28px;
  display: flex;
  align-items: center;
  justify-content: space-between;
  padding: 0 3px 0 8px;
  background: #ababab;

  button {
    display: flex;
    align-items: center;
    gap: 4px;
    color: #fff;
    font-weight: 700;
    font-size: 13px;
  }
`;

const BrowserTools = styled.div`
  height: 28px;
  display: flex;
  align-items: center;
  gap: 7px;
  padding: 0 0 2px 3px;

  > span {
    width: 1px;
    height: 18px;
    background: #888;
  }
  > button + span + button {
    margin-left: 1px;
  }
`;

const Tree = styled.ul`
  flex: 1;
  margin: 0;
  padding: 0;
  list-style: none;
  background: #fff;
  border: 1px solid #646464;
  overflow: hidden;
  font-family: "Noto Sans", "Open Sans", sans-serif;
  font-size: 12px;
  color: #000;
`;

const TreeRow = styled.li`
  height: 20px;
  display: flex;
  align-items: center;
  gap: ${(p) => (p.$info ? "2px" : "3px")};
  padding-left: ${(p) => (p.$root ? "5px" : "0")};
  white-space: nowrap;
`;

const Branch = styled.button`
  width: 21px;
  height: 20px;
`;

const BranchLines = ({ open, last }) => (
  <svg width="21" height="20" viewBox="0 0 21 20" fill="none" shapeRendering="crispEdges" aria-hidden="true">
    <path d={`M8.500 0v${last ? 10.5 : 20}M8.500 10.500h11`} stroke="#808080" />
    {open && (
      <>
        <path d="M4.500 6.500h8v8h-8z" fill="#fff" stroke="#808080" />
        <path d="M6 10.500h5M8.500 8v5" stroke="#000" />
      </>
    )}
  </svg>
);

const InfoBadge = () => (
  <Glyph w={15} h={16}>
    <circle cx="7.500" cy="8" r="6.300" fill="#f8f8f8" stroke="#444" strokeWidth="1.300" />
    <path d="M7.500 4v2M7.500 7v5" stroke="#3a4a6a" strokeWidth="1.800" />
  </Glyph>
);

/* ---------- graphics area ---------- */

const Canvas = styled.div`
  flex: 1;
  position: relative;
  display: flex;
  justify-content: center;
  align-items: flex-start;
  padding: 37px 11px 0 0;
  background: linear-gradient(#2d2d2d, #666 50%, #a2a2a2);
  border-right: 2px solid #d8d8d8;
`;

const DocControls = styled.div`
  position: absolute;
  right: 2px;
  top: 6px;
  display: flex;
  gap: 8px;
`;

const ViewCube = styled.div`
  position: absolute;
  right: 18px;
  top: 46px;
`;

const Triad = styled.div`
  position: absolute;
  left: 42px;
  bottom: 46px;
`;

const NavBar = styled.div`
  position: absolute;
  right: 1px;
  top: 120px;
  width: 34px;
  padding: 1px 2px;
  display: flex;
  flex-direction: column;
  align-items: stretch;
  background: linear-gradient(#858585, #929292);
  border: 2px solid #545454;
  border-radius: 6px;

  hr {
    width: 100%;
    margin: 0;
    border: none;
    border-top: 1px solid #5e5e5e;
  }
`;

const NavButton = styled.button`
  height: ${(p) => p.$h}px;
  display: flex;
  align-items: center;
  justify-content: ${(p) => (p.$end ? "flex-end" : "center")};
`;

const StatusBar = styled.footer`
  height: 32px;
  display: flex;
  align-items: center;
  justify-content: space-between;
  padding: 3px 12px 0 1px;
  color: #111;
  background: linear-gradient(#fafafa, #cdcdcd 85%, #bdbdbd);
  border-top: 1px solid #fff;
  border-bottom: 1px solid #6a6a6a;
`;

const Counts = styled.div`
  display: flex;

  span {
    width: 38px;
    padding-left: 10px;
    line-height: 24px;
    border-left: 1px solid #c0c0c0;
  }
  span:last-child {
    width: 29px;
  }
`;

const OUTLINE =
  "M92 22C102 21 112 25 120 32C138 50 155 76 167 101L142 182C152 202 158 235 162 268C166 310 165 345 160 375C154 415 134 452 118 462Q108 468 98 463C80 455 66 428 58 398C47 355 42 320 42 285C43 245 48 210 56 185L24 106C34 80 50 52 65 36C74 27 82 23 92 22Z";

const Model = () => (
  <svg width="190" height="480" viewBox="0 0 190 480" role="img" aria-label="Main Body">
    <defs>
      <linearGradient id="head" x1="24" x2="167" y1="0" y2="0" gradientUnits="userSpaceOnUse">
        <stop offset="0" stopColor="#9c9c9c" />
        <stop offset=".2" stopColor="#b4b4b4" />
        <stop offset=".34" stopColor="#bababa" />
        <stop offset=".5" stopColor="#d2d2d2" />
        <stop offset=".75" stopColor="#dadada" />
        <stop offset="1" stopColor="#c2c2c2" />
      </linearGradient>
      <linearGradient id="tail" x1="42" x2="164" y1="0" y2="0" gradientUnits="userSpaceOnUse">
        <stop offset="0" stopColor="#8c8c8c" />
        <stop offset=".22" stopColor="#8e8e8e" />
        <stop offset=".35" stopColor="#a2a2a2" />
        <stop offset=".6" stopColor="#b2b2b2" />
        <stop offset=".8" stopColor="#c2c2c2" />
        <stop offset="1" stopColor="#bababa" />
      </linearGradient>
      <linearGradient id="fade" x1="0" x2="0" y1="190" y2="320" gradientUnits="userSpaceOnUse">
        <stop offset="0" stopColor="#fff" stopOpacity="0" />
        <stop offset="1" stopColor="#fff" />
      </linearGradient>
      <mask id="tailMask" maskUnits="userSpaceOnUse" x="0" y="0" width="190" height="480">
        <path d="M0 0h190v480H0z" fill="url(#fade)" />
      </mask>
      <linearGradient id="ring" x1="70" x2="137" y1="290" y2="320" gradientUnits="userSpaceOnUse">
        <stop offset="0" stopColor="#dcdcdc" />
        <stop offset=".5" stopColor="#b4b4b4" />
        <stop offset="1" stopColor="#7c7c7c" />
      </linearGradient>
      <linearGradient id="ringTop" x1="0" x2="0" y1="266" y2="335" gradientUnits="userSpaceOnUse">
        <stop offset="0" stopColor="#777" />
        <stop offset=".5" stopColor="#999" stopOpacity="0" />
        <stop offset="1" stopColor="#d4d4d4" />
      </linearGradient>
      <filter id="soft" x="0" y="0" width="190" height="480" filterUnits="userSpaceOnUse">
        <feGaussianBlur stdDeviation="6" />
      </filter>
      <filter id="fine" x="0" y="0" width="190" height="480" filterUnits="userSpaceOnUse">
        <feGaussianBlur stdDeviation="2" />
      </filter>
      <clipPath id="hull">
        <path d={OUTLINE} />
      </clipPath>
    </defs>
    <g clipPath="url(#hull)">
      <path d="M0 0h190v480H0z" fill="url(#head)" />
      <path d="M0 180h190v300H0z" fill="url(#tail)" mask="url(#tailMask)" />
      <g filter="url(#soft)">
        <path d="M42 190q12 0 16 30l4 80q-2 60 6 100l-26-60z" fill="#888" opacity=".8" />
        <path d="M60 60q14-30 30-30l4 50-20 20-24 40-14-10z" fill="#cecece" />
        <path d="M66 130q10-30 22-10l4 90-20 10z" fill="#b4b4b4" opacity=".7" />
        <path d="M106 36q34 18 52 70l-10 34q-18-56-44-90z" fill="#b6b6b6" />
        <path d="M84 30l16 20q24 34 36 90l-10 20-34-70z" fill="#dedede" />
        <path d="M124 240l12 10-2 110h-10z" fill="#cecece" />
        <path d="M144 240l8 10v140h-6z" fill="#d0d0d0" opacity=".7" />
        <path d="M72 340q10 60 30 110h-26z" fill="#8c8c8c" opacity=".7" />
      </g>
      <g filter="url(#fine)">
        <path d="M101 140q5-32 12-32q12 0 18 40q7 50 0 84q-6 36-14 40q-8-4-11-22q-6-50-5-110z" fill="#fff" />
        <path d="M76 240q3 50 1 120q-6-60-1-120z" fill="#7c7c7c" opacity=".7" />
        <path d="M66 250q5 40 3 70q-6-40-3-70z" fill="#a4a4a4" />
        <path d="M24 106q16-50 50-80l-3 8q-32 32-42 80z" fill="#989898" />
        <path d="M100 24q40 22 66 77l-3 5q-24-52-60-78z" fill="#d8d8d8" />
        <path d="M134 436q2 8-2 16l-3-2q0-8 5-14z" fill="#f4f4f4" />
      </g>
      <path d="M94 100l4 80 5 86h-4l-3-86z" fill="#e2e2e2" opacity=".6" />
      <path d="M106 335l3 130h-3z" fill="#a8a8a8" opacity=".6" />
      <path d="M90 26h5v10h-5z" fill="#9a9a9a" opacity=".7" />
    </g>
    <ellipse cx="103.500" cy="301" rx="33.500" ry="34" fill="url(#ring)" />
    <ellipse cx="103.500" cy="301" rx="33.500" ry="34" fill="url(#ringTop)" />
    <ellipse cx="103.500" cy="301" rx="25.500" ry="26" fill="#bebebe" />
    <path d="M92 278l2 46q-15-7-16-23q1-16 14-23z" fill="#d8d8d8" />
    <path d="M92 278l2 46q10 5 20 1v-49q-11-4-22 2z" fill="#b6b6b6" />
    <path d="M114 277l6 2v42l-6 3z" fill="#cacaca" />
    <path d="M92.500 18v8M88.500 22h8" stroke="#f4e800" />
    <path d="M92.500 17l2 2.500h-4zM92.500 27l2-2.500h-4zM88 22l2-2v4zM97 22l-2-2v4z" fill="#f4e800" />
    <path d="M91 24h4v3h-4z" fill="#555" opacity=".5" />
    <path d="M95 41h1v1h-1z" fill="#333" />
  </svg>
);

export default function App() {
  return (
    <Window>
      <GlobalStyle />
      <IconDefs />
      <Header>
        <AppButton type="button" aria-label="Application menu">
          <AppMark>
            <Glyph w={18} h={27}>
              <path d="M1 1h16v6l-4 1v9l4 2v6h-16v-6l4-2v-9l-4-1z" fill="#d8561a" />
              <path d="M1 1h16v2l-12 1v4l-4-1z" fill="#f0812c" />
              <path d="M5 8h8v9l-8 2z" fill="#b8440f" />
              <path d="M1 19l12-2l4 2v6h-16z" fill="#e8702a" />
            </Glyph>
            PRO
          </AppMark>
          <Caret w={8} color="#222" />
        </AppButton>
        <HeaderRows>
          <TitleBar>
            <Strip $edge>
              <BarButton type="button" aria-label="New">{bar.newFile}</BarButton>
              <BarButton type="button" $narrow aria-label="New options"><Caret w={6} color="#444" /></BarButton>
              <BarButton type="button" aria-label="Open">{bar.open}</BarButton>
              <BarButton type="button" aria-label="Save">{bar.save}</BarButton>
              <BarButton type="button" aria-label="Undo">{bar.undo}</BarButton>
              <BarButton type="button" aria-label="Redo">{bar.redo}</BarButton>
              <Divider />
              <BarButton type="button" aria-label="Update">{bar.update}</BarButton>
              <BarButton type="button" $narrow aria-label="Update options"><Caret w={6} color="#444" /></BarButton>
              <BarButton type="button" aria-label="Select">{bar.select}</BarButton>
              <BarButton type="button" $narrow aria-label="Select options"><Caret w={6} color="#444" /></BarButton>
              <BarButton type="button" aria-label="Appearance">{bar.sphere}</BarButton>
            </Strip>
            <SelectWrap>
              <StyleSelect aria-label="Material" defaultValue="Generic">
                <option>Generic</option>
              </StyleSelect>
              <Caret w={10} color="#444" />
            </SelectWrap>
            <ArrowButton type="button" $w={24} aria-label="More commands">
              <Glyph w={10} h={8}>
                <path d="M0 0l4 4l-4 4zM5 0l4 4l-4 4z" fill="#000" />
              </Glyph>
            </ArrowButton>
            <DocTitle>Main Body</DocTitle>
            <ArrowButton type="button" $w={17} aria-label="Show search">
              <Glyph w={6} h={10}>
                <path d="M0 0l5 5l-5 5z" fill="#000" />
              </Glyph>
            </ArrowButton>
            <Search type="text" aria-label="Search" placeholder="Type a keyword or phrase" />
            <Strip>
              <BarButton type="button" aria-label="Find">{bar.binoculars}</BarButton>
              <BarButton type="button" aria-label="Subscription">{bar.key}</BarButton>
              <BarButton type="button" aria-label="Communication center">{bar.dish}</BarButton>
              <BarButton type="button" aria-label="Favorites">{bar.star}</BarButton>
              <BarButton type="button" aria-label="Profile">{bar.user}</BarButton>
              <Account type="button">lmm966@yah...</Account>
              <BarButton type="button" $narrow aria-label="Account options"><Caret w={6} color="#444" /></BarButton>
              <BarButton type="button" aria-label="Exchange">{bar.exchange}</BarButton>
              <Divider $wide />
              <BarButton type="button" aria-label="Help">{bar.help}</BarButton>
              <BarButton type="button" $narrow aria-label="Help options"><Caret w={6} color="#444" /></BarButton>
            </Strip>
            <WindowControls>
              <ControlButton type="button" $first $grow={9} aria-label="Minimize">
                <Glyph w={18} h={16}>
                  <path d="M1 9h16v4h-16z" fill="#fff" stroke="#444a5c" />
                </Glyph>
              </ControlButton>
              <ControlButton type="button" $grow={8} aria-label="Restore">
                <Glyph w={18} h={18}>
                  <path d="M5 1h12v12h-12z" fill="#fff" stroke="#444a5c" />
                  <path d="M1 4h12v12h-12z" fill="#fff" stroke="#444a5c" />
                  <path d="M5 8h4v4h-4z" fill="#a29b95" stroke="#444a5c" />
                </Glyph>
              </ControlButton>
              <ControlButton type="button" $close $grow={15} aria-label="Close">
                <Glyph w={18} h={16}>
                  <path d="M2 2h5l2 3l2-3h5l-4 6l4 6h-5l-2-3l-2 3h-5l4-6z" fill="#fff" stroke="#444a5c" />
                </Glyph>
              </ControlButton>
            </WindowControls>
          </TitleBar>
          <Tabs>
            {TABS.map((t, i) => (
              <Tab type="button" key={t} $active={i === 0}>
                {t}
              </Tab>
            ))}
            <TabSpacer />
            <Tab type="button" aria-label="Minimize ribbon">
              <Glyph w={34} h={12}>
                <path d="M3 2h13q2 0 2 2v4q0 2-2 2h-13q-2 0-2-2v-4q0-2 2-2z" fill="#e6e8ec" />
                <path d="M6 8l3.500-4l3.500 4z" fill="#444" />
                <path d="M25 4.500h6l-3 4z" fill="#eee" />
              </Glyph>
            </Tab>
          </Tabs>
        </HeaderRows>
      </Header>

      <Ribbon>
        <Panel title="Sketch" w={100} pad={15}>
          <Big icon="sketch" label={"Create\n2D Sketch"} w={68} />
          <SideCaret type="button" aria-label="Sketch options"><Caret w={6} /></SideCaret>
        </Panel>
        <Panel title="Primitives" w={78} center>
          <Big icon="box" label="Box" w={60} menu />
        </Panel>
        <Panel title="Create" w={296} pad={1} menu>
          <Big icon="extrude" label="Extrude" w={59} />
          <Big icon="revolve" label="Revolve" w={60} />
          <Tools w={83} gap={5} items={[["loft", "Loft"], ["sweep", "Sweep"], ["rib", "Rib"]]} />
          <Tools w={84} items={[["coil", "Coil"], ["emboss", "Emboss"], ["derive", "Derive"]]} />
        </Panel>
        <Panel title="Modify" w={328} pad={2} menu>
          <Big icon="hole" label="Hole" w={48} />
          <Big icon="fillet" label="Fillet" w={48} />
          <Tools w={95} gap={5} items={[["chamfer", "Chamfer"], ["shell", "Shell"], ["draft", "Draft"]]} />
          <Tools w={96} items={[["thread", "Thread"], ["split", "Split"], ["combine", "Combine"]]} />
          <Minis items={[["moveFace", "Move face"], ["copyObject", "Copy object"], ["moveBodies", "Move bodies"]]} />
        </Panel>
        <Panel title="Work Features" w={116} pad={1}>
          <Big icon="plane" label="Plane" w={66} menu />
          <MiniGrid $cols={2}>
            <Mini type="button" aria-label="Axis">{small.axis}</Mini>
            <Mini type="button" $caret aria-label="Axis options"><Caret w={6} /></Mini>
            <Mini type="button" aria-label="Point">{small.point}</Mini>
            <Mini type="button" $caret aria-label="Point options"><Caret w={6} /></Mini>
            <Mini type="button" aria-label="UCS">{small.ucs}</Mini>
          </MiniGrid>
        </Panel>
        <Panel title="Pattern" w={60} center>
          <Minis items={[["patternRect", "Rectangular pattern"], ["patternCirc", "Circular pattern"], ["mirror", "Mirror"]]} />
        </Panel>
        <Panel title="Surface" w={79} center menu>
          <Minis
            cols={2}
            gap={8}
            items={[["thicken", "Thicken"], ["patch", "Patch"], ["stitch", "Stitch"], ["trim", "Trim"], ["sculpt", "Sculpt"], ["deleteFace", "Delete face"]]}
          />
        </Panel>
        <Panel title="Plastic Part" w={86} center>
          <Minis
            cols={2}
            gap={2}
            items={[["grill", "Grill"], ["boss", "Boss"], ["snap", "Snap fit"], ["rest", "Rest"], ["ruleFillet", "Rule fillet"], ["lip", "Lip"]]}
          />
        </Panel>
        <Panel title="Harness" w={66} center>
          <Minis items={[["pin", "Place pin"], ["pinGroup", "Place pin group"], ["harnessProps", "Harness properties"]]} />
        </Panel>
        <Panel title="Convert" w={91} center last>
          <Big icon="convert" label={"Convert to\nSheet Metal"} w={84} />
        </Panel>
      </Ribbon>

      <Main>
        <Browser>
          <Grip>
            <span />
            <button type="button" aria-label="Close browser">
              <Glyph w={8} h={8}>
                <path d="M1 1l6 6M7 1l-6 6" stroke="#000" strokeWidth="1.500" />
              </Glyph>
            </button>
          </Grip>
          <BrowserHead>
            <button type="button">
              Model <Caret w={8} color="#fff" />
            </button>
            <button type="button" aria-label="Browser help">
              <Glyph w={20} h={20}>
                <path d="M4 3h14v13h-2l1 4l-5-3h-8z" fill="#333" />
                <path d="M2 1h14v15h-14z" fill="#fbf9b8" stroke="#111" strokeWidth="1.300" />
                <path d="M6 6q0-2.500 3-2.500t3 2.500q0 1.500-3 3v1.500M9 12v2" stroke="#17178a" strokeWidth="2" />
              </Glyph>
            </button>
          </BrowserHead>
          <BrowserTools>
            <button type="button" aria-label="Filter">
              <Glyph w={15} h={14}>
                <path d="M1 2h13l-5 5v5l-3 1v-6z" fill="#999" stroke="#111" strokeWidth="1.200" />
              </Glyph>
            </button>
            <span />
            <button type="button" aria-label="Find in browser">
              <Glyph w={16} h={14}>
                <path d="M3 3l1-3h2v3h4v-3h2l1 3l3 6v4h-6v-4h-4v4h-6v-4z" fill="#000" />
                <path d="M3 6l-1 4M7 4v2M9 4v2M12 6l1 4" stroke="#fff" />
              </Glyph>
            </button>
          </BrowserTools>
          <Tree>
            <TreeRow $root>
              {node.part}
              Main Body
            </TreeRow>
            {TREE.map(({ label, icon, open, info, last }) => (
              <TreeRow key={label} $info={info}>
                <Branch as={open ? "button" : "span"} aria-label={open ? `Expand ${label}` : undefined}>
                  <BranchLines open={open} last={last} />
                </Branch>
                {info && <InfoBadge />}
                {node[icon]}
                {label}
              </TreeRow>
            ))}
          </Tree>
        </Browser>

        <Canvas>
          <Model />
          <DocControls>
            <button type="button" aria-label="Minimize document">
              <Glyph w={12} h={12}>
                <path d="M1 7h11v3h-11z" fill="#fff" />
              </Glyph>
            </button>
            <button type="button" aria-label="Restore document">
              <Glyph w={12} h={12}>
                <path d="M4 1.500h7v7h-2M2 4h7v6h-7z" stroke="#fff" strokeWidth="1.600" />
              </Glyph>
            </button>
            <button type="button" aria-label="Close document">
              <Glyph w={12} h={12}>
                <path d="M2 2l8 8M10 2l-8 8" stroke="#fff" strokeWidth="2.500" />
              </Glyph>
            </button>
          </DocControls>
          <ViewCube>
            <svg width="60" height="56" viewBox="0 0 60 56" role="img" aria-label="View cube, front">
              <ellipse cx="30" cy="50" rx="28" ry="2" fill="#333" opacity=".5" />
              <path d="M7 7l43-2l1 42l-42 2z" fill="#848484" stroke="#959595" />
              <path d="M16 15l25-1v26l-24 1z" fill="#7b7d82" />
              <text x="29" y="31" textAnchor="middle" fontFamily="Open Sans" fontSize="10" fontWeight="700" fill="#55575c">
                FRONT
              </text>
            </svg>
          </ViewCube>
          <NavBar>
            <NavButton type="button" $h={10} $end aria-label="Close navigation bar">
              <Glyph w={8} h={8}>
                <circle cx="4" cy="4" r="4" fill="#5c5c5c" />
                <path d="M2.500 2.500l3 3M5.500 2.500l-3 3" stroke="#ccc" />
              </Glyph>
            </NavButton>
            <NavButton type="button" $h={38} aria-label="Steering wheel">
              <Glyph w={22} h={22}>
                <path d="M11 1h10v10a10 10 0 1 1-10-10z" fill="#b2b4b6" stroke="#d4d4d4" strokeWidth="1.200" />
                <circle cx="11" cy="11" r="6" fill="#bcbec0" stroke="#66696c" strokeWidth="1.300" />
                <path d="M4 18l3-3M18 18l-3-3" stroke="#66696c" />
              </Glyph>
            </NavButton>
            <NavButton type="button" $h={10} aria-label="Wheel options"><Caret w={6} color="#5c5c5c" /></NavButton>
            <hr />
            <NavButton type="button" $h={26} aria-label="Pan">
              <Glyph w={16} h={16}>
                <path d="M5 15l-4-6q-1-2 1-1l2 2l-1-6q1-2 2 0l1 4v-6q1-2 2 0v6l1-6q1-1 2 0v6l2-4q1-1 1.500 0l-1 6q-1 4-2.500 5z" fill="#dcdcdc" stroke="#6a6a6a" strokeWidth=".8" />
              </Glyph>
            </NavButton>
            <NavButton type="button" $h={24} aria-label="Zoom">
              <Glyph w={18} h={18}>
                <circle cx="7" cy="8" r="5" fill="#b6c3c6" stroke="#ccc" strokeWidth="1.300" />
                <path d="M10 12l4 4" stroke="#ccc" strokeWidth="2" />
                <path d="M13 4h5M15.500 1.500v5M13 8.500h5" stroke="#555" />
              </Glyph>
            </NavButton>
            <NavButton type="button" $h={10} aria-label="Zoom options"><Caret w={6} color="#5c5c5c" /></NavButton>
            <NavButton type="button" $h={24} aria-label="Orbit">
              <Glyph w={18} h={18}>
                <ellipse cx="8" cy="9" rx="3.500" ry="7.500" stroke="#686868" />
                <ellipse cx="9" cy="9" rx="8" ry="3.500" stroke="#686868" />
                <path d="M8 7v4M6 9h4M13 4v4M11 6h4" stroke="#666" />
              </Glyph>
            </NavButton>
            <NavButton type="button" $h={10} aria-label="Orbit options"><Caret w={6} color="#5c5c5c" /></NavButton>
            <NavButton type="button" $h={24} aria-label="Look at">
              <Glyph w={18} h={18}>
                <path d="M2 6h14v9h-14z" fill="#a2a2a2" stroke="#cacaca" strokeWidth="1.300" />
                <path d="M5 9h8v3h-8z" stroke="#666" />
                <path d="M3 5l5-3v2h7" stroke="#cacaca" />
              </Glyph>
            </NavButton>
            <NavButton type="button" $h={16} $end aria-label="Navigation bar menu">
              <Glyph w={8} h={8}>
                <circle cx="4" cy="4" r="3.500" stroke="#555" />
                <path d="M2 3h4M2.500 5h3" stroke="#ccc" />
              </Glyph>
            </NavButton>
          </NavBar>
          <Triad>
            <svg width="54" height="52" viewBox="0 0 54 52" aria-hidden="true">
              <path d="M11 45v-24" stroke="#14b814" />
              <path d="M11 15l5 12h-11z" fill="#0fae0f" />
              <text x="7" y="12" fontFamily="Open Sans" fontSize="11" fill="#2ed22e">Y</text>
              <path d="M11 44h22" stroke="#c81010" />
              <path d="M42 43l-11-5v10z" fill="#c80c0c" />
              <text x="43" y="48" fontFamily="Open Sans" fontSize="14" fill="#e81a1a">X</text>
              <circle cx="11" cy="44" r="5.500" fill="#0000c0" stroke="#00005a" />
            </svg>
          </Triad>
        </Canvas>
      </Main>

      <StatusBar>
        Ready
        <Counts>
          <span>1</span>
          <span>1</span>
        </Counts>
      </StatusBar>
    </Window>
  );
}
